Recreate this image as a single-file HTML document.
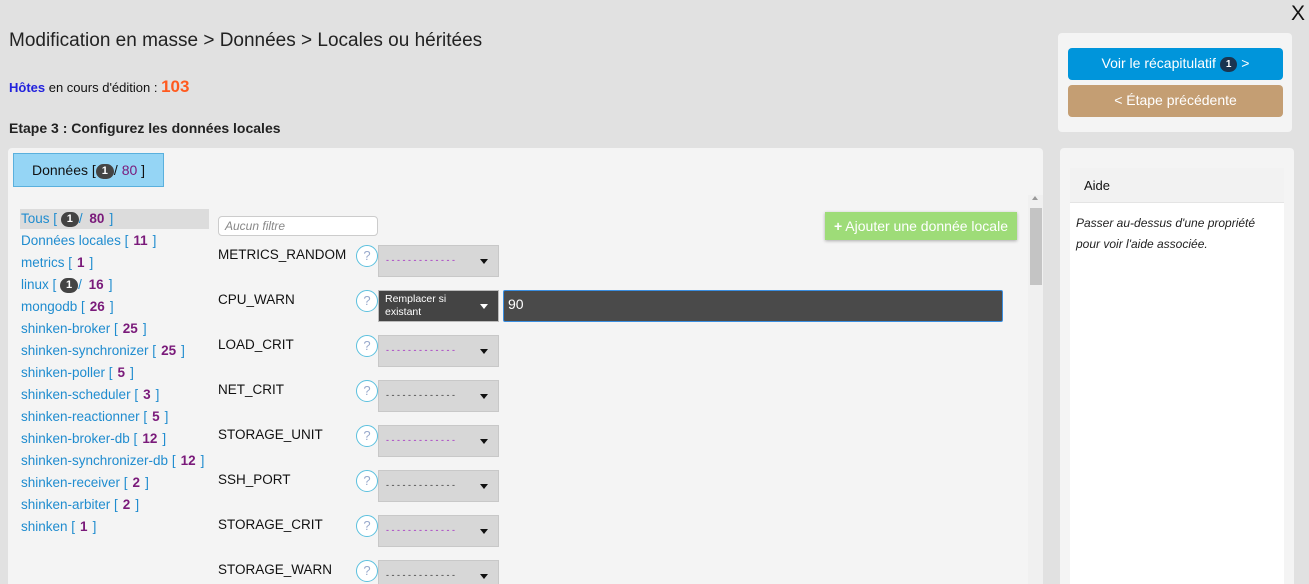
<!DOCTYPE html>
<html><head><meta charset="utf-8"><style>
*{box-sizing:border-box;margin:0;padding:0}
html,body{width:1309px;height:584px;overflow:hidden}
body{background:#e1e1e1;font-family:"Liberation Sans",sans-serif;position:relative;color:#111}
.a{position:absolute}
.badge{display:inline-block;background:#444;color:#fff;border-radius:9px;font-size:11px;font-weight:bold;padding:1px 6px;line-height:13px;vertical-align:1px}
.lst div{height:22px;font-size:13.5px;color:#1f8ccf;padding-left:1px;line-height:18px}
.lst b{color:#7a1a7a;font-weight:bold;margin:0 5px}
.lbl{left:218px;font-size:13.5px;color:#111}
.q{left:356px;width:22px;height:22px;border:1.5px solid #5bc0de;border-radius:50%;color:#9ac;font-size:13px;text-align:center;line-height:19px;background:#fff}
.sel{left:378px;width:121px;height:32px;background:#d7d7d7;border:1px solid #c8c8c8}
.sel span{position:absolute;left:7px;top:9px;font-size:9px;color:#333;letter-spacing:0}
.sel i{position:absolute;right:10px;top:13px;border-left:4px solid transparent;border-right:4px solid transparent;border-top:5px solid #111}
</style></head><body>
<div class="a" style="right:4px;top:2px;font-size:21px">X</div>
<div class="a" style="left:9px;top:30px;font-size:19px;color:#222">Modification en masse &gt; Données &gt; Locales ou héritées</div>
<div class="a" style="left:9px;top:77px;font-size:13px"><b style="color:#2222dd">Hôtes</b> en cours d'édition : <b style="color:#ff5a1f;font-size:17px">103</b></div>
<div class="a" style="left:9px;top:120px;font-size:14px;font-weight:bold;color:#222">Etape 3 : Configurez les données locales</div>

<div class="a" style="left:1058px;top:33px;width:234px;height:99px;background:#f4f4f4;border-radius:4px"></div>
<div class="a" style="left:1068px;top:48px;width:215px;height:32px;background:#0095db;border-radius:4px;color:#fff;font-size:14px;text-align:center;line-height:31px">Voir le récapitulatif <span class="badge" style="background:#1a3550;font-size:10px">1</span> &gt;</div>
<div class="a" style="left:1068px;top:85px;width:215px;height:32px;background:#c49e73;border-radius:4px;color:#fff;font-size:14px;text-align:center;line-height:31px">&lt; Étape précédente</div>

<div class="a" style="left:1060px;top:148px;width:234px;height:440px;background:#f4f4f4;border-radius:4px"></div>
<div class="a" style="left:1070px;top:168px;width:214px;height:420px;background:#fff"></div>
<div class="a" style="left:1070px;top:168px;width:214px;height:35px;background:#f2f2f2;border-bottom:1px solid #e4e4e4;font-size:13px;padding:10px 14px">Aide</div>
<div class="a" style="left:1076px;top:213px;width:205px;font-size:12px;font-style:italic;line-height:21px;color:#222">Passer au-dessus d'une propriété pour voir l'aide associée.</div>

<div class="a" style="left:8px;top:148px;width:1035px;height:440px;background:#f4f4f4;border-radius:4px"></div>
<div class="a" style="left:13px;top:153px;width:151px;height:34px;background:#95d5f5;border:1px solid #5ab0dd;font-size:14px;text-align:center;line-height:32px">Données [<span class="badge">1</span>/ <span style="color:#7a1a7a">80</span> ]</div>

<div class="a" style="left:20px;top:209px;width:189px;height:20px;background:#dcdcdc"></div>
<div class="a lst" style="left:20px;top:210px">
<div>Tous [ <span class="badge">1</span>/ <b style="margin-left:3px">80</b>]</div>
<div>Données locales [<b>11</b>]</div>
<div>metrics [<b>1</b>]</div>
<div>linux [ <span class="badge">1</span>/ <b style="margin-left:3px">16</b>]</div>
<div>mongodb [<b>26</b>]</div>
<div>shinken-broker [<b>25</b>]</div>
<div>shinken-synchronizer [<b>25</b>]</div>
<div>shinken-poller [<b>5</b>]</div>
<div>shinken-scheduler [<b>3</b>]</div>
<div>shinken-reactionner [<b>5</b>]</div>
<div>shinken-broker-db [<b>12</b>]</div>
<div>shinken-synchronizer-db [<b>12</b>]</div>
<div>shinken-receiver [<b>2</b>]</div>
<div>shinken-arbiter [<b>2</b>]</div>
<div>shinken [<b>1</b>]</div>
</div>

<div class="a" style="left:218px;top:216px;width:160px;height:20px;background:#fff;border:1px solid #ccc;border-radius:4px;font-size:12px;font-style:italic;color:#888;padding:2px 6px">Aucun filtre</div>
<div class="a" style="left:825px;top:212px;width:192px;height:28px;background:#9edc78;color:#fff;font-size:14px;line-height:28px;text-align:center;box-shadow:0 1px 3px rgba(0,0,0,.3)"><b>+</b> Ajouter une donnée locale</div>

<div class="a" style="left:1028px;top:195px;width:15px;height:393px;background:#f0f0f0"></div>
<div class="a" style="left:1030px;top:208px;width:12px;height:77px;background:#c4c4c4"></div>
<div class="a" style="left:1032px;top:196px;border-left:3px solid transparent;border-right:3px solid transparent;border-bottom:4px solid #999"></div>

<div class="a lbl" style="top:247px">METRICS_RANDOM</div><div class="a q" style="top:245px">?</div><div class="a sel" style="top:245px"><span style="color:#a020c0">- - - - - - - - - - - - -</span><i></i></div>
<div class="a lbl" style="top:292px">CPU_WARN</div><div class="a q" style="top:290px">?</div>
<div class="a" style="left:378px;top:290px;width:121px;height:32px;background:#444;border:1px solid #bbb;color:#fff;font-size:10.5px;padding:2px 6px;line-height:13px">Remplacer si<br>existant<i style="position:absolute;right:10px;top:13px;border-left:4px solid transparent;border-right:4px solid transparent;border-top:5px solid #fff"></i></div>
<div class="a" style="left:503px;top:290px;width:500px;height:32px;background:#4a4a4a;border:1px solid #3a8ee0;border-radius:2px;color:#fff;font-size:14px;padding:5px 4px">90</div>
<div class="a lbl" style="top:337px">LOAD_CRIT</div><div class="a q" style="top:335px">?</div><div class="a sel" style="top:335px"><span style="color:#a020c0">- - - - - - - - - - - - -</span><i></i></div>
<div class="a lbl" style="top:382px">NET_CRIT</div><div class="a q" style="top:380px">?</div><div class="a sel" style="top:380px"><span>- - - - - - - - - - - - -</span><i></i></div>
<div class="a lbl" style="top:427px">STORAGE_UNIT</div><div class="a q" style="top:425px">?</div><div class="a sel" style="top:425px"><span style="color:#a020c0">- - - - - - - - - - - - -</span><i></i></div>
<div class="a lbl" style="top:472px">SSH_PORT</div><div class="a q" style="top:470px">?</div><div class="a sel" style="top:470px"><span>- - - - - - - - - - - - -</span><i></i></div>
<div class="a lbl" style="top:517px">STORAGE_CRIT</div><div class="a q" style="top:515px">?</div><div class="a sel" style="top:515px"><span style="color:#a020c0">- - - - - - - - - - - - -</span><i></i></div>
<div class="a lbl" style="top:562px">STORAGE_WARN</div><div class="a q" style="top:560px">?</div><div class="a sel" style="top:560px"><span>- - - - - - - - - - - - -</span><i></i></div>
</body></html>
